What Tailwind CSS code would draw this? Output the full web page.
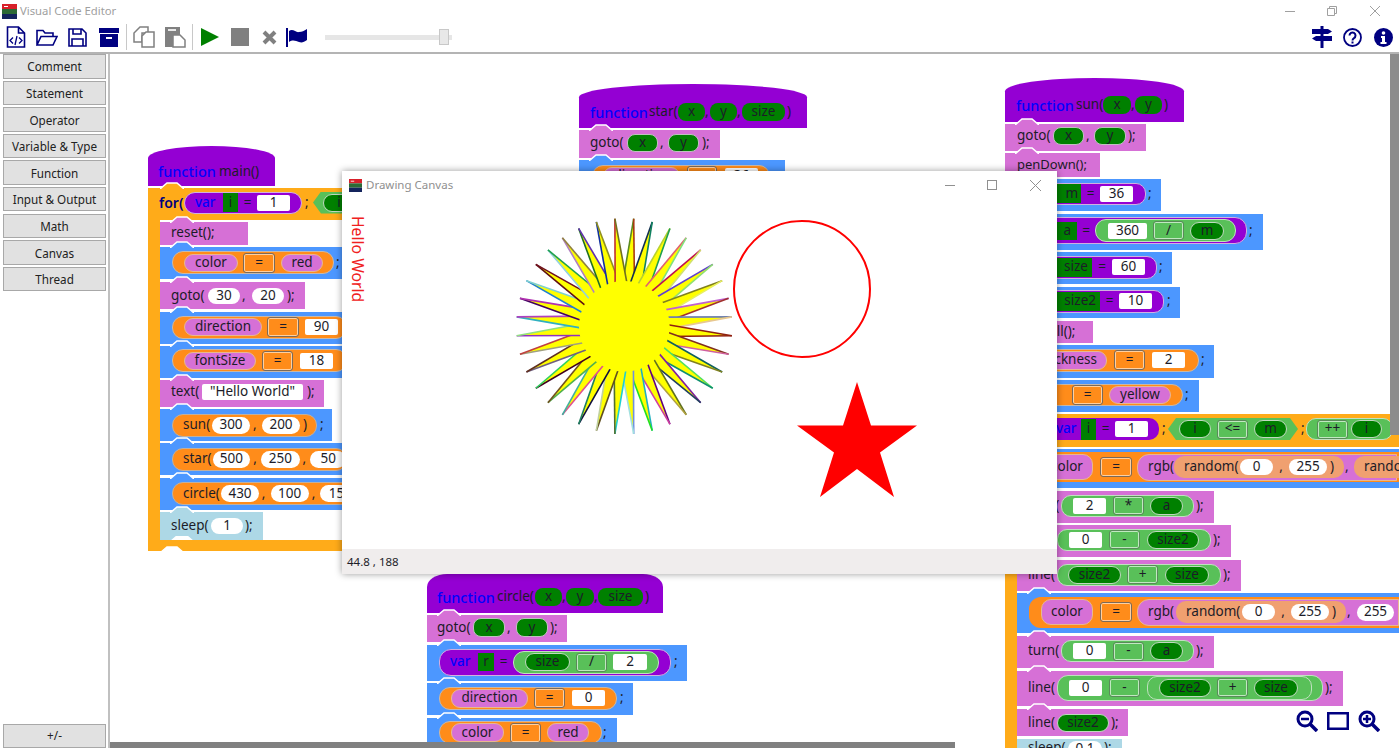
<!DOCTYPE html>
<html>
<head>
<meta charset="utf-8">
<title>Visual Code Editor</title>
<script src="https://cdn.jsdelivr.net/npm/@tailwindcss/browser@4"></script>
</head>
<body class="bg-white overflow-hidden">
<svg class="absolute w-0 h-0"><defs><path id="n" d="M0 7L7 1H17L24 7" fill="currentColor" stroke="#fff" stroke-width="1.5"/></defs></svg>
<div class="w-[1399px] h-[748px] flex flex-col overflow-hidden whitespace-nowrap text-[#1c1c28] text-[13.5px] leading-none font-['Noto_Sans',sans-serif]">

<!-- title bar -->
<div class="h-[22px] shrink-0 flex items-center pl-[2px]">
  <svg width="15" height="15" viewBox="0 0 15 15"><rect width="15" height="5" fill="#d8202a"/><rect x="2" y="2" width="4" height="1" fill="#fff"/><rect y="5" width="15" height="5" fill="#2d6a35"/><rect y="10" width="15" height="5" fill="#14245c"/></svg>
  <span class="ml-[3px] text-[11.3px] text-[#a0a0a0]">Visual Code Editor</span>
  <div class="ml-auto flex items-center pr-[19px]">
    <svg width="10" height="10" viewBox="0 0 10 10"><path d="M0 5.5H10" stroke="#a0a0a0"/></svg>
    <svg class="ml-[32px]" width="10" height="10" viewBox="0 0 10 10" fill="none" stroke="#a0a0a0"><path d="M.5 2.5h7v7h-7zM2.5 2.5v-2h7v7h-2"/></svg>
    <svg class="ml-[33px]" width="10" height="10" viewBox="0 0 10 10"><path d="M0 0L10 10M10 0L0 10" stroke="#a0a0a0"/></svg>
  </div>
</div>

<!-- toolbar -->
<div class="h-[30px] shrink-0 flex items-center pl-[6px] pr-[6px] border-b-2 border-[#b4b4b4] box-content">
  <svg width="20" height="22" viewBox="0 0 20 22" fill="none" stroke="#000080" stroke-width="1.6"><path d="M1.5 1h11l6 6v14h-17zM12.5 1v6h6"/><path d="M7 11.5l-3 3 3 3M13 11.5l3 3-3 3M11 10l-2 9" stroke-width="1.3"/></svg>
  <svg class="ml-[10px]" width="22" height="17" viewBox="0 0 22 17" fill="none" stroke="#000080" stroke-width="1.6"><path d="M1 16V1.5h6l2 2.5h8v3M1 16l4-8.500h16l-4 8.500z"/></svg>
  <svg class="ml-[10px]" width="19" height="19" viewBox="0 0 19 19" fill="none" stroke="#000080" stroke-width="1.6"><path d="M1 1h13l4 4v13H1zM5 1v5h8V1M4 18v-7h11v7"/></svg>
  <svg class="ml-[12px]" width="20" height="19" viewBox="0 0 20 19" fill="#000080"><rect width="20" height="5"/><rect x="1" y="6" width="18" height="13"/><rect x="7" y="9" width="6" height="2" fill="#fff"/></svg>
  <div class="ml-[7px] w-px h-[26px] bg-[#c8c8c8]"></div>
  <svg class="ml-[6px]" width="22" height="22" viewBox="0 0 22 22" fill="#fff" stroke="#808080" stroke-width="1.5"><path d="M7 1h8v6H9v9H1V7z"/><path d="M13 6h8v15H9V10z"/></svg>
  <svg class="ml-[9px]" width="22" height="22" viewBox="0 0 22 22"><path d="M1 1h15v8H9v12H1z" fill="#808080"/><rect x="4" y="3" width="8" height="2" fill="#e8e8e8"/><path d="M9 9h7l5 5v7H9z" fill="#fff" stroke="#808080" stroke-width="1.500"/></svg>
  <div class="ml-[6px] w-px h-[26px] bg-[#c8c8c8]"></div>
  <svg class="ml-[8px]" width="18" height="18" viewBox="0 0 18 18"><path d="M0 0L18 9L0 18z" fill="#008000"/></svg>
  <div class="ml-[12px] w-[18px] h-[18px] bg-[#808080]"></div>
  <svg class="ml-[13px]" width="15" height="15" viewBox="0 0 15 15"><path d="M2 2L13 13M13 2L2 13" stroke="#808080" stroke-width="4"/></svg>
  <svg class="ml-[9px]" width="21" height="19" viewBox="0 0 21 19" fill="#000080"><rect width="2" height="19"/><path d="M3 3c4-3 7 2 10 1 3 0 5-1 8-3v11c-3 2-5 3-8 2-3-1-6-3-10 0z"/></svg>
  <div class="ml-[18px] w-[127px] h-[5px] bg-[#e6e6e6] relative flex items-center">
    <div class="absolute left-[114px] w-[10px] h-[16px] bg-[#e8e8e8] border border-[#c8c8c8]"></div>
  </div>
  <div class="ml-auto flex items-center">
    <svg width="20" height="22" viewBox="0 0 20 22" fill="#000080"><rect x="8.500" width="3" height="22"/><path d="M0 3H16L20 5.500L16 8H0z"/><path d="M4 10H20V15H4L0 12.500z"/></svg>
    <svg class="ml-[11px]" width="19" height="19" viewBox="0 0 19 19" fill="none" stroke="#000080" stroke-width="1.800"><circle cx="9.500" cy="9.500" r="8.500"/><path d="M6.500 7.500a3 3 0 1 1 4.500 2.600c-1.200.7-1.500 1.300-1.500 2.400" stroke-width="2"/><path d="M9.500 13.500v2" stroke-width="2"/></svg>
    <svg class="ml-[12px]" width="19" height="19" viewBox="0 0 19 19"><circle cx="9.500" cy="9.500" r="9.500" fill="#000080"/><circle cx="9.500" cy="5" r="1.800" fill="#fff"/><path d="M7 8h4v6h1.500v2h-6v-2H8v-4H7z" fill="#fff"/></svg>
  </div>
</div>

<div class="flex flex-1 min-h-0">
  <!-- sidebar -->
  <div class="w-[110px] shrink-0 border-r-2 border-[#c0c0c0] pl-[3px] pr-[2px] flex flex-col gap-[2.1px] text-[11.7px] text-[#222]">
    <div class="h-[24.5px] pt-[2px] flex items-center justify-center bg-[#e1e1e1] border border-[#a8a8a8]">Comment</div>
    <div class="h-[24.5px] pt-[2px] flex items-center justify-center bg-[#e1e1e1] border border-[#a8a8a8]">Statement</div>
    <div class="h-[24.5px] pt-[2px] flex items-center justify-center bg-[#e1e1e1] border border-[#a8a8a8]">Operator</div>
    <div class="h-[24.5px] pt-[2px] flex items-center justify-center bg-[#e1e1e1] border border-[#a8a8a8]">Variable &amp; Type</div>
    <div class="h-[24.5px] pt-[2px] flex items-center justify-center bg-[#e1e1e1] border border-[#a8a8a8]">Function</div>
    <div class="h-[24.5px] pt-[2px] flex items-center justify-center bg-[#e1e1e1] border border-[#a8a8a8]">Input &amp; Output</div>
    <div class="h-[24.5px] pt-[2px] flex items-center justify-center bg-[#e1e1e1] border border-[#a8a8a8]">Math</div>
    <div class="h-[24.5px] pt-[2px] flex items-center justify-center bg-[#e1e1e1] border border-[#a8a8a8]">Canvas</div>
    <div class="h-[24.5px] pt-[2px] flex items-center justify-center bg-[#e1e1e1] border border-[#a8a8a8]">Thread</div>
    <div class="mt-auto h-[24px] flex items-center justify-center bg-[#e1e1e1] border border-[#a8a8a8]">+/-</div>
  </div>

  <!-- canvas -->
  <div class="relative flex-1 overflow-hidden">

    <!-- main -->
    <div class="absolute left-[38px] top-[92px] flex flex-col">
      <div class="h-[40px] w-[127px] bg-[#9400d3] rounded-[50%_50%_0_0/30%_30%_0_0] flex items-end pl-[10px] pb-[8px]"><span class="w-[61px] text-[#0000ff] text-[14.500px] font-medium">function</span><span>main()</span></div>
      <div class="relative mt-[2px] h-[32px] w-[450px] bg-[#ffab19] flex items-center pl-[11px] pb-[3px]">
        <svg class="absolute left-[12px] -top-[6px] w-[24px] h-[7px] text-[#ffab19]"><use href="#n"/></svg>
        <span class="w-[25px] text-[#000080] font-semibold text-[14px]">for(</span>
        <div class="w-[118px] h-[22px] rounded-[11px] bg-[#9400d3] border border-[#d0b0e0] flex items-center pl-[10px]">
          <span class="w-[28px] text-[#0000ff] font-medium">var</span>
          <div class="w-[15px] h-[19px] bg-[#008000] flex items-center justify-center">i</div>
          <span class="w-[19px] text-center">=</span>
          <div class="w-[33px] h-[16px] bg-white rounded-[2px] flex items-center justify-center">1</div>
        </div>
        <span class="w-[8px] ml-[3px]">;</span>
        <div class="w-[200px] h-[22px] bg-[#59c059] flex items-center pl-[10px] [clip-path:polygon(8px_0,calc(100%-8px)_0,100%_50%,calc(100%-8px)_100%,8px_100%,0_50%)]">
          <div class="w-[32px] h-[18px] rounded-[9px] bg-[#008000] border border-[#c0d8c0] flex items-center justify-center">i</div>
        </div>
      </div>
      <div class="flex">
        <div class="w-[12px] bg-[#ffab19] shrink-0"></div>
        <div class="flex flex-col">
          <div class="relative mt-[2px] h-[23px] w-[88px] bg-[#d670d6] flex items-center pl-[11px] pb-[2px]">
            <svg class="absolute left-[10px] -top-[6px] w-[24px] h-[7px] text-[#d670d6]"><use href="#n"/></svg>reset();
          </div>
          <div class="relative mt-[2px] h-[32px] w-[190px] bg-[#4c97ff] flex items-center pl-[12px] pb-[1px]">
            <svg class="absolute left-[10px] -top-[6px] w-[24px] h-[7px] text-[#4c97ff]"><use href="#n"/></svg>
            <div class="w-[162px] h-[23px] rounded-[11px] bg-[#ff8c1a] border border-[#c8b8a8] flex items-center pl-[11px]">
              <div class="w-[54px] h-[18px] rounded-[9px] bg-[#d670d6] border border-[#e8b890] flex items-center justify-center">color</div>
              <div class="ml-[5px] w-[32px] h-[20px] rounded-[3px] bg-[#ff8c1a] border border-[#7a6a5a] shadow-[inset_0_0_0_1px_#ffd0a0] flex items-center justify-center">=</div>
              <div class="ml-[6px] w-[42px] h-[18px] rounded-[9px] bg-[#d670d6] border border-[#e8b890] flex items-center justify-center">red</div>
            </div>
            <span class="ml-[2px]">;</span>
          </div>
          <div class="relative mt-[3px] h-[27px] w-[145px] bg-[#d670d6] flex items-center pl-[11px]">
            <svg class="absolute left-[10px] -top-[6px] w-[24px] h-[7px] text-[#d670d6]"><use href="#n"/></svg>
            <span class="w-[37px]">goto(</span>
            <div class="w-[32px] h-[16px] bg-white rounded-full flex items-center justify-center">30</div>
            <span class="w-[12px] pl-[2px]">,</span>
            <div class="w-[32px] h-[16px] bg-white rounded-full flex items-center justify-center">20</div>
            <span class="ml-[3px]">);</span>
          </div>
          <div class="relative mt-[3px] h-[32px] w-[190px] bg-[#4c97ff] flex items-center pl-[12px] pb-[2px]">
            <svg class="absolute left-[10px] -top-[6px] w-[24px] h-[7px] text-[#4c97ff]"><use href="#n"/></svg>
            <div class="w-[175px] h-[23px] rounded-[11px] bg-[#ff8c1a] border border-[#c8b8a8] flex items-center pl-[11px]">
              <div class="w-[78px] h-[18px] rounded-[9px] bg-[#d670d6] border border-[#e8b890] flex items-center justify-center">direction</div>
              <div class="ml-[5px] w-[32px] h-[20px] rounded-[3px] bg-[#ff8c1a] border border-[#7a6a5a] shadow-[inset_0_0_0_1px_#ffd0a0] flex items-center justify-center">=</div>
              <div class="ml-[6px] w-[33px] h-[16px] bg-white rounded-[2px] flex items-center justify-center">90</div>
            </div>
          </div>
          <div class="relative mt-[2px] h-[32px] w-[190px] bg-[#4c97ff] flex items-center pl-[12px] pb-[3px]">
            <svg class="absolute left-[10px] -top-[6px] w-[24px] h-[7px] text-[#4c97ff]"><use href="#n"/></svg>
            <div class="w-[175px] h-[23px] rounded-[11px] bg-[#ff8c1a] border border-[#c8b8a8] flex items-center pl-[11px]">
              <div class="w-[72px] h-[18px] rounded-[9px] bg-[#d670d6] border border-[#e8b890] flex items-center justify-center">fontSize</div>
              <div class="ml-[6px] w-[31px] h-[20px] rounded-[3px] bg-[#ff8c1a] border border-[#7a6a5a] shadow-[inset_0_0_0_1px_#ffd0a0] flex items-center justify-center">=</div>
              <div class="ml-[7px] w-[33px] h-[16px] bg-white rounded-[2px] flex items-center justify-center">18</div>
            </div>
          </div>
          <div class="relative mt-[2px] h-[27px] w-[164px] bg-[#d670d6] flex items-center pl-[11px] pb-[3px]">
            <svg class="absolute left-[10px] -top-[6px] w-[24px] h-[7px] text-[#d670d6]"><use href="#n"/></svg>
            <span class="w-[31px]">text(</span>
            <div class="w-[101px] h-[16px] bg-white rounded-[2px] flex items-center justify-center">"Hello World"</div>
            <span class="ml-[4px]">);</span>
          </div>
          <div class="relative mt-[2px] h-[32px] w-[172px] bg-[#4c97ff] flex items-center pl-[12px]">
            <svg class="absolute left-[10px] -top-[6px] w-[24px] h-[7px] text-[#4c97ff]"><use href="#n"/></svg>
            <div class="w-[145px] h-[23px] rounded-[11px] bg-[#ff8c1a] border border-[#c0b0a0] flex items-center pl-[10px]">
              <span class="w-[29px]">sun(</span>
              <div class="w-[38px] h-[17px] bg-white rounded-full flex items-center justify-center">300</div>
              <span class="w-[12px] pl-[3px]">,</span>
              <div class="w-[38px] h-[17px] bg-white rounded-full flex items-center justify-center">200</div>
              <span class="ml-[3px]">)</span>
            </div>
            <span class="ml-[3px]">;</span>
          </div>
          <div class="relative mt-[2px] h-[32px] w-[190px] bg-[#4c97ff] flex items-center pl-[12px]">
            <svg class="absolute left-[10px] -top-[6px] w-[24px] h-[7px] text-[#4c97ff]"><use href="#n"/></svg>
            <div class="w-[175px] h-[23px] rounded-[11px] bg-[#ff8c1a] border border-[#c0b0a0] flex items-center pl-[10px]">
              <span class="w-[30px]">star(</span>
              <div class="w-[38px] h-[17px] bg-white rounded-full flex items-center justify-center">500</div>
              <span class="w-[11px] pl-[3px]">,</span>
              <div class="w-[39px] h-[17px] bg-white rounded-full flex items-center justify-center">250</div>
              <span class="w-[11px] pl-[3px]">,</span>
              <div class="w-[36px] h-[17px] bg-white rounded-full flex items-center justify-center">50</div>
            </div>
          </div>
          <div class="relative mt-[3px] h-[32px] w-[190px] bg-[#4c97ff] flex items-center pl-[12px] pb-[1px]">
            <svg class="absolute left-[10px] -top-[6px] w-[24px] h-[7px] text-[#4c97ff]"><use href="#n"/></svg>
            <div class="w-[190px] h-[23px] rounded-[11px] bg-[#ff8c1a] border border-[#c0b0a0] flex items-center pl-[10px] shrink-0">
              <span class="w-[39px]">circle(</span>
              <div class="w-[38px] h-[17px] bg-white rounded-full flex items-center justify-center">430</div>
              <span class="w-[12px] pl-[3px]">,</span>
              <div class="w-[39px] h-[17px] bg-white rounded-full flex items-center justify-center">100</div>
              <span class="w-[11px] pl-[3px]">,</span>
              <div class="w-[42px] h-[17px] bg-white rounded-full flex items-center justify-center">150</div>
            </div>
          </div>
          <div class="relative mt-[2px] h-[28px] w-[103px] bg-[#add8e6] flex items-center pl-[11px]">
            <svg class="absolute left-[10px] -top-[6px] w-[24px] h-[7px] text-[#add8e6]"><use href="#n"/></svg>
            <span class="w-[40px]">sleep(</span>
            <div class="w-[32px] h-[16px] bg-white rounded-full flex items-center justify-center">1</div>
            <span class="ml-[2px]">);</span>
            <svg class="absolute left-[10px] bottom-0 w-[24px] h-[4px] text-white"><use href="#n" y="-1"/></svg>
          </div>
        </div>
      </div>
      <div class="relative h-[11px] w-[250px] bg-[#ffab19]">
        <svg class="absolute left-[12px] bottom-0 w-[24px] h-[5px] text-white"><use href="#n"/></svg>
      </div>
    </div>

    <!-- star -->
    <div class="absolute left-[469px] top-[30px] flex flex-col">
      <div class="h-[44px] w-[228px] bg-[#9400d3] rounded-[50%_50%_0_0/30%_30%_0_0] flex items-end pl-[11px] pb-[7px]">
        <div class="h-[18px] flex items-center">
          <span class="w-[59px] text-[#0000ff] text-[14.500px] font-medium">function</span><span class="w-[29px]">star(</span>
          <div class="w-[27px] h-[18px] rounded-[8px] bg-[#008000] flex items-center justify-center">x</div><span class="w-[5px]">,</span>
          <div class="w-[27px] h-[18px] rounded-[8px] bg-[#008000] flex items-center justify-center">y</div><span class="w-[5px]">,</span>
          <div class="w-[43px] h-[18px] rounded-[8px] bg-[#008000] flex items-center justify-center">size</div><span class="ml-[2px]">)</span>
        </div>
      </div>
      <div class="relative mt-[2px] h-[28px] w-[141px] bg-[#d670d6] flex items-center pl-[11px] pb-[3px]">
        <svg class="absolute left-[10px] -top-[6px] w-[24px] h-[7px] text-[#d670d6]"><use href="#n"/></svg>
        <span class="w-[37px]">goto(</span>
        <div class="w-[31px] h-[18px] rounded-[8px] bg-[#008000] border border-[#c0c0c0] flex items-center justify-center">x</div><span class="w-[10px] pl-[2px]">,</span>
        <div class="w-[31px] h-[18px] rounded-[8px] bg-[#008000] border border-[#c0c0c0] flex items-center justify-center">y</div><span class="ml-[3px]">);</span>
      </div>
      <div class="relative mt-[2px] h-[32px] w-[206px] bg-[#4c97ff] flex items-center pl-[13px]">
        <svg class="absolute left-[10px] -top-[6px] w-[24px] h-[7px] text-[#4c97ff]"><use href="#n"/></svg>
        <div class="w-[178px] h-[23px] rounded-[11px] bg-[#ff8c1a] border border-[#c8b8a8] flex items-center pl-[10px]">
          <div class="w-[77px] h-[18px] rounded-[9px] bg-[#d670d6] border border-[#e8b890] flex items-center justify-center">direction</div>
          <div class="ml-[7px] w-[30px] h-[20px] rounded-[3px] bg-[#ff8c1a] border border-[#7a6a5a] shadow-[inset_0_0_0_1px_#ffd0a0] flex items-center justify-center">=</div>
          <div class="ml-[8px] w-[33px] h-[16px] bg-white rounded-[2px] flex items-center justify-center">36</div>
        </div>
      </div>
    </div>

    <!-- circle -->
    <div class="absolute left-[317px] top-[520px] flex flex-col">
      <div class="h-[39px] w-[236px] bg-[#9400d3] rounded-[20px_20px_0_0/13px_13px_0_0] flex items-end pl-[10px] pb-[7px]">
        <div class="h-[18px] flex items-center">
          <span class="w-[60px] text-[#0000ff] text-[14.500px] font-medium">function</span><span class="w-[38px]">circle(</span>
          <div class="w-[27px] h-[18px] rounded-[8px] bg-[#008000] flex items-center justify-center">x</div><span class="w-[4px]">,</span>
          <div class="w-[28px] h-[18px] rounded-[8px] bg-[#008000] flex items-center justify-center">y</div><span class="w-[4px]">,</span>
          <div class="w-[45px] h-[18px] rounded-[8px] bg-[#008000] flex items-center justify-center">size</div><span class="ml-[2px]">)</span>
        </div>
      </div>
      <div class="relative mt-[2px] h-[27px] w-[140px] bg-[#d670d6] flex items-center pl-[10px] pb-[2px]">
        <svg class="absolute left-[10px] -top-[6px] w-[24px] h-[7px] text-[#d670d6]"><use href="#n"/></svg>
        <span class="w-[36px]">goto(</span>
        <div class="w-[32px] h-[19px] rounded-[8px] bg-[#008000] border border-[#c0c0c0] flex items-center justify-center">x</div><span class="w-[11px] pl-[2px]">,</span>
        <div class="w-[32px] h-[19px] rounded-[8px] bg-[#008000] border border-[#c0c0c0] flex items-center justify-center">y</div><span class="ml-[2px]">);</span>
      </div>
      <div class="relative mt-[3px] h-[36px] w-[260px] bg-[#4c97ff] flex items-center pl-[12px] pb-[2px]">
        <svg class="absolute left-[10px] -top-[6px] w-[24px] h-[7px] text-[#4c97ff]"><use href="#n"/></svg>
        <div class="w-[232px] h-[27px] rounded-[12px] bg-[#9400d3] border border-[#d0b0e0] flex items-center pl-[10px]">
          <span class="w-[28px] text-[#0000ff] font-medium">var</span>
          <div class="w-[16px] h-[18px] bg-[#008000] flex items-center justify-center">r</div>
          <span class="w-[19px] text-center">=</span>
          <div class="w-[146px] h-[23px] rounded-[11px] bg-[#59c059] border border-[#c0e0c0] flex items-center pl-[11px]">
            <div class="w-[45px] h-[18px] rounded-[9px] bg-[#008000] border border-[#c0d8c0] flex items-center justify-center">size</div>
            <div class="ml-[6px] w-[31px] h-[19px] rounded-[3px] bg-[#59c059] border border-[#5a8a5a] shadow-[inset_0_0_0_1px_#c0e8c0] flex items-center justify-center">/</div>
            <div class="ml-[6px] w-[34px] h-[16px] bg-white rounded-[2px] flex items-center justify-center">2</div>
          </div>
        </div>
        <span class="ml-[3px]">;</span>
      </div>
      <div class="relative mt-[2px] h-[32px] w-[206px] bg-[#4c97ff] flex items-center pl-[12px] pb-[2px]">
        <svg class="absolute left-[10px] -top-[6px] w-[24px] h-[7px] text-[#4c97ff]"><use href="#n"/></svg>
        <div class="w-[178px] h-[23px] rounded-[11px] bg-[#ff8c1a] border border-[#c8b8a8] flex items-center pl-[11px]">
          <div class="w-[77px] h-[19px] rounded-[9px] bg-[#d670d6] border border-[#e8b890] flex items-center justify-center">direction</div>
          <div class="ml-[6px] w-[31px] h-[20px] rounded-[3px] bg-[#ff8c1a] border border-[#7a6a5a] shadow-[inset_0_0_0_1px_#ffd0a0] flex items-center justify-center">=</div>
          <div class="ml-[7px] w-[33px] h-[16px] bg-white rounded-[2px] flex items-center justify-center">0</div>
        </div>
        <span class="ml-[3px]">;</span>
      </div>
      <div class="relative mt-[3px] h-[32px] w-[190px] bg-[#4c97ff] flex items-center pl-[12px] pb-[3px]">
        <svg class="absolute left-[10px] -top-[6px] w-[24px] h-[7px] text-[#4c97ff]"><use href="#n"/></svg>
        <div class="w-[163px] h-[23px] rounded-[11px] bg-[#ff8c1a] border border-[#c8b8a8] flex items-center pl-[11px]">
          <div class="w-[53px] h-[19px] rounded-[9px] bg-[#d670d6] border border-[#e8b890] flex items-center justify-center">color</div>
          <div class="ml-[6px] w-[31px] h-[20px] rounded-[3px] bg-[#ff8c1a] border border-[#7a6a5a] shadow-[inset_0_0_0_1px_#ffd0a0] flex items-center justify-center">=</div>
          <div class="ml-[6px] w-[42px] h-[19px] rounded-[9px] bg-[#d670d6] border border-[#e8b890] flex items-center justify-center">red</div>
        </div>
        <span class="ml-[1px]">;</span>
      </div>
    </div>

    <!-- sun -->
    <div class="absolute left-[895px] top-[24px] flex flex-col">
      <div class="h-[44px] w-[179px] bg-[#9400d3] rounded-[50%_50%_0_0/30%_30%_0_0] flex items-end pl-[11px] pb-[8px]">
        <div class="h-[18px] flex items-center">
          <span class="w-[60px] text-[#0000ff] text-[14.500px] font-medium">function</span><span class="w-[27px]">sun(</span>
          <div class="w-[28px] h-[18px] rounded-[8px] bg-[#008000] flex items-center justify-center">x</div><span class="w-[4px]">,</span>
          <div class="w-[27px] h-[18px] rounded-[8px] bg-[#008000] flex items-center justify-center">y</div><span class="ml-[2px]">)</span>
        </div>
      </div>
      <div class="relative mt-[2px] h-[27px] w-[141px] bg-[#d670d6] flex items-center pl-[12px] pb-[3px]">
        <svg class="absolute left-[10px] -top-[6px] w-[24px] h-[7px] text-[#d670d6]"><use href="#n"/></svg>
        <span class="w-[36px]">goto(</span>
        <div class="w-[31px] h-[18px] rounded-[8px] bg-[#008000] border border-[#c0c0c0] flex items-center justify-center">x</div><span class="w-[10px] pl-[2px]">,</span>
        <div class="w-[32px] h-[18px] rounded-[8px] bg-[#008000] border border-[#c0c0c0] flex items-center justify-center">y</div><span class="ml-[2px]">);</span>
      </div>
      <div class="relative mt-[2px] h-[24px] w-[95px] bg-[#d670d6] flex items-center pl-[12px] pb-[1px]">
        <svg class="absolute left-[10px] -top-[6px] w-[24px] h-[7px] text-[#d670d6]"><use href="#n"/></svg><span class="text-[13px]">penDown();</span>
      </div>
      <div class="relative mt-[2px] h-[32px] w-[156px] bg-[#4c97ff] flex items-center pl-[12px] pb-[3px]">
        <div class="w-[129px] h-[22px] rounded-[10px] bg-[#9400d3] border border-[#d0b0e0] flex items-center pl-[10px]">
          <span class="w-[25px] text-[#0000ff] font-medium">var</span>
          <div class="w-[28px] h-[19px] bg-[#008000] flex items-center justify-end pr-[3px]">m</div>
          <span class="w-[19px] text-center">=</span>
          <div class="w-[33px] h-[16px] bg-white rounded-[2px] flex items-center justify-center">36</div>
        </div>
        <span class="ml-[2px]">;</span>
      </div>
      <div class="relative mt-[3px] h-[36px] w-[258px] bg-[#4c97ff] flex items-center pl-[12px] pb-[3px]">
        <div class="w-[230px] h-[27px] rounded-[12px] bg-[#9400d3] border border-[#d0b0e0] flex items-center pl-[10px]">
          <span class="w-[25px] text-[#0000ff] font-medium">var</span>
          <div class="w-[24px] h-[18px] bg-[#008000] flex items-center justify-end pr-[6px]">a</div>
          <span class="w-[18px] text-center">=</span>
          <div class="w-[141px] h-[23px] rounded-[11px] bg-[#59c059] border border-[#c0e0c0] flex items-center pl-[12px]">
            <div class="w-[39px] h-[16px] bg-white rounded-[2px] flex items-center justify-center">360</div>
            <div class="ml-[6px] w-[31px] h-[19px] rounded-[3px] bg-[#59c059] border border-[#5a8a5a] shadow-[inset_0_0_0_1px_#c0e8c0] flex items-center justify-center">/</div>
            <div class="ml-[6px] w-[34px] h-[18px] rounded-[9px] bg-[#008000] border border-[#c0d8c0] flex items-center justify-center">m</div>
          </div>
        </div>
        <span class="ml-[2px]">;</span>
      </div>
      <div class="relative mt-[2px] h-[32px] w-[167px] bg-[#4c97ff] flex items-center pl-[12px] pb-[2px]">
        <div class="w-[140px] h-[23px] rounded-[10px] bg-[#9400d3] border border-[#d0b0e0] flex items-center pl-[10px]">
          <span class="w-[28px] text-[#0000ff] font-medium">var</span>
          <div class="w-[36px] h-[19px] bg-[#008000] flex items-center justify-end pr-[4px]">size</div>
          <span class="w-[20px] text-center">=</span>
          <div class="w-[33px] h-[16px] bg-white rounded-[2px] flex items-center justify-center">60</div>
        </div>
        <span class="ml-[2px]">;</span>
      </div>
      <div class="relative mt-[3px] h-[31px] w-[175px] bg-[#4c97ff] flex items-center pl-[12px] pb-[3px]">
        <div class="w-[147px] h-[23px] rounded-[10px] bg-[#9400d3] border border-[#d0b0e0] flex items-center pl-[10px]">
          <span class="w-[28px] text-[#0000ff] font-medium">var</span>
          <div class="w-[44px] h-[19px] bg-[#008000] flex items-center justify-end pr-[4px]">size2</div>
          <span class="w-[19px] text-center">=</span>
          <div class="w-[33px] h-[16px] bg-white rounded-[2px] flex items-center justify-center">10</div>
        </div>
        <span class="ml-[3px]">;</span>
      </div>
      <div class="relative mt-[3px] h-[22px] w-[88px] bg-[#d670d6] flex items-center pl-[17px]">penFill();</div>
      <div class="relative mt-[2px] h-[33px] w-[209px] bg-[#4c97ff] flex items-center pl-[12px] pb-[3px]">
        <div class="w-[182px] h-[23px] rounded-[11px] bg-[#ff8c1a] border border-[#c8b8a8] flex items-center pl-[10px]">
          <div class="w-[79px] h-[19px] rounded-[9px] bg-[#d670d6] border border-[#e8b890] flex items-center justify-end pr-[9px]">thickness</div>
          <div class="ml-[7px] w-[31px] h-[20px] rounded-[3px] bg-[#ff8c1a] border border-[#7a6a5a] shadow-[inset_0_0_0_1px_#ffd0a0] flex items-center justify-center">=</div>
          <div class="ml-[7px] w-[33px] h-[16px] bg-white rounded-[2px] flex items-center justify-center">2</div>
        </div>
        <span class="ml-[2px]">;</span>
      </div>
      <div class="relative mt-[2px] h-[32px] w-[194px] bg-[#4c97ff] flex items-center pl-[12px] pb-[2px]">
        <div class="w-[166px] h-[22px] rounded-[11px] bg-[#ff8c1a] border border-[#c8b8a8] flex items-center pl-[10px]">
          <div class="w-[28px] h-[18px] rounded-[9px] bg-[#d670d6] border border-[#e8b890]"></div>
          <div class="ml-[16px] w-[31px] h-[20px] rounded-[3px] bg-[#ff8c1a] border border-[#7a6a5a] shadow-[inset_0_0_0_1px_#ffd0a0] flex items-center justify-center">=</div>
          <div class="ml-[6px] w-[62px] h-[18px] rounded-[9px] bg-[#d670d6] border border-[#e8b890] flex items-center justify-center">yellow</div>
        </div>
        <span class="ml-[2px]">;</span>
      </div>
      <div class="relative mt-[2px] h-[33px] w-[394px] bg-[#ffab19] flex items-center pl-[12px] pb-[3px]">
        <span class="w-[25px] text-[#000080] font-semibold">for(</span>
        <div class="w-[117px] h-[22px] rounded-[10px] bg-[#9400d3] flex items-center pl-[12px]">
          <span class="w-[27px] text-[#0000ff] font-medium pl-[2px]">var</span>
          <div class="w-[15px] h-[21px] bg-[#008000] flex items-center justify-center">i</div>
          <span class="w-[19px] text-center">=</span>
          <div class="w-[33px] h-[16px] bg-white rounded-[2px] flex items-center justify-center">1</div>
        </div>
        <span class="w-[9px] pl-[3px]">;</span>
        <div class="w-[130px] h-[22px] bg-[#59c059] flex items-center pl-[11px] [clip-path:polygon(8px_0,calc(100%-8px)_0,100%_50%,calc(100%-8px)_100%,8px_100%,0_50%)]">
          <div class="w-[32px] h-[18px] rounded-[9px] bg-[#008000] border border-[#c0d8c0] flex items-center justify-center">i</div>
          <div class="ml-[6px] w-[31px] h-[19px] rounded-[3px] bg-[#59c059] border border-[#5a8a5a] shadow-[inset_0_0_0_1px_#c0e8c0] flex items-center justify-center">&lt;=</div>
          <div class="ml-[6px] w-[33px] h-[18px] rounded-[9px] bg-[#008000] border border-[#c0d8c0] flex items-center justify-center">m</div>
        </div>
        <span class="w-[8px] pl-[3px]">;</span>
        <div class="w-[87px] h-[22px] rounded-[10px] bg-[#59c059] border border-[#c0e0c0] flex items-center pl-[10px]">
          <div class="w-[31px] h-[19px] rounded-[3px] bg-[#59c059] border border-[#5a8a5a] shadow-[inset_0_0_0_1px_#c0e8c0] flex items-center justify-center">++</div>
          <div class="ml-[3px] w-[31px] h-[18px] rounded-[9px] bg-[#008000] border border-[#c0d8c0] flex items-center justify-center">i</div>
        </div>
      </div>
      <div class="flex">
        <div class="w-[12px] bg-[#ffab19] shrink-0"></div>
        <div class="flex flex-col">
          <div class="relative mt-[2px] h-[39px] w-[382px] bg-[#4c97ff] flex items-center pl-[12px] pb-[3px]">
            <div class="w-[370px] h-[30px] rounded-l-[12px] bg-[#ff8c1a] flex items-center pl-[12px]">
              <div class="w-[52px] h-[26px] rounded-[10px] bg-[#d670d6] border border-[#e8b890] flex items-center justify-center">color</div>
              <div class="ml-[7px] w-[32px] h-[20px] rounded-[3px] bg-[#ff8c1a] border border-[#7a6a5a] shadow-[inset_0_0_0_1px_#ffd0a0] flex items-center justify-center">=</div>
              <div class="ml-[5px] w-[260px] h-[27px] rounded-l-[12px] bg-[#d670d6] border border-[#e8b890] flex items-center pl-[10px]">
                <span class="w-[28px]">rgb(</span>
                <div class="w-[170px] h-[22px] rounded-[10px] bg-[#f0a070] shrink-0 flex items-center pl-[10px]">
                  <span class="w-[56px]">random(</span>
                  <div class="w-[33px] h-[16px] bg-white rounded-full flex items-center justify-center">0</div>
                  <span class="w-[16px] text-center">,</span>
                  <div class="w-[38px] h-[16px] bg-white rounded-full flex items-center justify-center">255</div>
                  <span class="ml-[3px]">)</span>
                </div>
                <span class="w-[10px] pl-[1px] shrink-0">,</span>
                <div class="w-[100px] h-[22px] rounded-[10px] bg-[#f0a070] shrink-0 flex items-center pl-[10px]">random(</div>
              </div>
            </div>
          </div>
          <div class="relative mt-[3px] h-[32px] w-[197px] bg-[#d670d6] flex items-center pl-[11px] pb-[3px]">
            <span class="w-[33px]">turn(</span>
            <div class="w-[133px] h-[22px] rounded-[10px] bg-[#59c059] border border-[#c0e0c0] flex items-center pl-[11px]">
              <div class="w-[33px] h-[16px] bg-white rounded-[2px] flex items-center justify-center">2</div>
              <div class="ml-[7px] w-[31px] h-[19px] rounded-[3px] bg-[#59c059] border border-[#5a8a5a] shadow-[inset_0_0_0_1px_#c0e8c0] flex items-center justify-center">*</div>
              <div class="ml-[6px] w-[33px] h-[18px] rounded-[9px] bg-[#008000] border border-[#c0d8c0] flex items-center justify-center">a</div>
            </div>
            <span class="ml-[2px]">);</span>
          </div>
          <div class="relative mt-[2px] h-[32px] w-[214px] bg-[#d670d6] flex items-center pl-[11px] pb-[3px]">
            <span class="w-[29px]">line(</span>
            <div class="w-[154px] h-[22px] rounded-[10px] bg-[#59c059] border border-[#c0e0c0] flex items-center pl-[11px]">
              <div class="w-[33px] h-[16px] bg-white rounded-[2px] flex items-center justify-center">0</div>
              <div class="ml-[7px] w-[31px] h-[19px] rounded-[3px] bg-[#59c059] border border-[#5a8a5a] shadow-[inset_0_0_0_1px_#c0e8c0] flex items-center justify-center">-</div>
              <div class="ml-[7px] w-[52px] h-[18px] rounded-[9px] bg-[#008000] border border-[#c0d8c0] flex items-center justify-center">size2</div>
            </div>
            <span class="ml-[2px]">);</span>
          </div>
          <div class="relative mt-[3px] h-[31px] w-[224px] bg-[#d670d6] flex items-center pl-[11px] pb-[2px]">
            <span class="w-[29px]">line(</span>
            <div class="w-[164px] h-[22px] rounded-[10px] bg-[#59c059] border border-[#c0e0c0] flex items-center pl-[10px]">
              <div class="w-[53px] h-[18px] rounded-[9px] bg-[#008000] border border-[#c0d8c0] flex items-center justify-center">size2</div>
              <div class="ml-[6px] w-[31px] h-[19px] rounded-[3px] bg-[#59c059] border border-[#5a8a5a] shadow-[inset_0_0_0_1px_#c0e8c0] flex items-center justify-center">+</div>
              <div class="ml-[7px] w-[44px] h-[18px] rounded-[9px] bg-[#008000] border border-[#c0d8c0] flex items-center justify-center">size</div>
            </div>
            <span class="ml-[2px]">);</span>
          </div>
          <div class="relative mt-[2px] h-[40px] w-[382px] bg-[#4c97ff] flex items-center pl-[12px] pb-[2px]">
            <svg class="absolute left-[10px] -top-[6px] w-[24px] h-[7px] text-[#4c97ff]"><use href="#n"/></svg>
            <div class="w-[370px] h-[31px] rounded-l-[12px] bg-[#ff8c1a] flex items-center pl-[12px]">
              <div class="w-[52px] h-[26px] rounded-[10px] bg-[#d670d6] border border-[#e8b890] flex items-center justify-center">color</div>
              <div class="ml-[7px] w-[32px] h-[20px] rounded-[3px] bg-[#ff8c1a] border border-[#7a6a5a] shadow-[inset_0_0_0_1px_#ffd0a0] flex items-center justify-center">=</div>
              <div class="ml-[5px] w-[262px] h-[27px] rounded-l-[12px] bg-[#d670d6] border border-[#e8b890] flex items-center pl-[10px]">
                <span class="w-[28px]">rgb(</span>
                <div class="w-[170px] h-[22px] rounded-[10px] bg-[#f0a070] shrink-0 flex items-center pl-[10px]">
                  <span class="w-[56px]">random(</span>
                  <div class="w-[33px] h-[16px] bg-white rounded-full flex items-center justify-center">0</div>
                  <span class="w-[16px] text-center">,</span>
                  <div class="w-[38px] h-[16px] bg-white rounded-full flex items-center justify-center">255</div>
                  <span class="ml-[3px]">)</span>
                </div>
                <span class="w-[11px] pl-[1px] shrink-0">,</span>
                <div class="w-[37px] h-[17px] bg-white rounded-full shrink-0 flex items-center justify-center">255</div>
              </div>
            </div>
          </div>
          <div class="relative mt-[3px] h-[32px] w-[197px] bg-[#d670d6] flex items-center pl-[11px] pb-[2px]">
            <svg class="absolute left-[10px] -top-[6px] w-[24px] h-[7px] text-[#d670d6]"><use href="#n"/></svg>
            <span class="w-[33px]">turn(</span>
            <div class="w-[133px] h-[22px] rounded-[10px] bg-[#59c059] border border-[#c0e0c0] flex items-center pl-[11px]">
              <div class="w-[33px] h-[16px] bg-white rounded-[2px] flex items-center justify-center">0</div>
              <div class="ml-[7px] w-[31px] h-[19px] rounded-[3px] bg-[#59c059] border border-[#5a8a5a] shadow-[inset_0_0_0_1px_#c0e8c0] flex items-center justify-center">-</div>
              <div class="ml-[6px] w-[33px] h-[18px] rounded-[9px] bg-[#008000] border border-[#c0d8c0] flex items-center justify-center">a</div>
            </div>
            <span class="ml-[2px]">);</span>
          </div>
          <div class="relative mt-[3px] h-[35px] w-[326px] bg-[#d670d6] flex items-center pl-[11px] pb-[2px]">
            <svg class="absolute left-[10px] -top-[6px] w-[24px] h-[7px] text-[#d670d6]"><use href="#n"/></svg>
            <span class="w-[29px]">line(</span>
            <div class="w-[266px] h-[26px] rounded-[11px] bg-[#59c059] border border-[#c0e0c0] flex items-center pl-[11px]">
              <div class="w-[33px] h-[16px] bg-white rounded-[2px] flex items-center justify-center">0</div>
              <div class="ml-[7px] w-[31px] h-[19px] rounded-[3px] bg-[#59c059] border border-[#5a8a5a] shadow-[inset_0_0_0_1px_#c0e8c0] flex items-center justify-center">-</div>
              <div class="ml-[7px] w-[165px] h-[24px] rounded-[10px] bg-[#59c059] border border-[#c0e0c0] flex items-center pl-[11px]">
                <div class="w-[52px] h-[18px] rounded-[9px] bg-[#008000] border border-[#c0d8c0] flex items-center justify-center">size2</div>
                <div class="ml-[6px] w-[31px] h-[19px] rounded-[3px] bg-[#59c059] border border-[#5a8a5a] shadow-[inset_0_0_0_1px_#c0e8c0] flex items-center justify-center">+</div>
                <div class="ml-[6px] w-[44px] h-[18px] rounded-[9px] bg-[#008000] border border-[#c0d8c0] flex items-center justify-center">size</div>
              </div>
            </div>
            <span class="ml-[2px]">);</span>
          </div>
          <div class="relative mt-[3px] h-[27px] w-[111px] bg-[#d670d6] flex items-center pl-[11px]">
            <svg class="absolute left-[10px] -top-[6px] w-[24px] h-[7px] text-[#d670d6]"><use href="#n"/></svg>
            <span class="w-[29px]">line(</span>
            <div class="w-[52px] h-[18px] rounded-[9px] bg-[#008000] border border-[#c0d8c0] flex items-center justify-center">size2</div>
            <span class="ml-[2px]">);</span>
          </div>
          <div class="relative mt-[3px] h-[30px] w-[105px] bg-[#add8e6] flex items-start pt-[2px] pl-[11px]">
            <span class="w-[40px]">sleep(</span>
            <div class="w-[34px] h-[16px] bg-white rounded-full flex items-center justify-center">0.1</div>
            <span class="ml-[2px]">);</span>
          </div>
        </div>
      </div>
    </div>

    <!-- scrollbars and zoom controls -->
    <div class="absolute right-0 top-0 w-[9px] h-[381px] bg-[#8c8c8c] z-[5]"></div>
    <div class="absolute left-0 bottom-0 w-[845px] h-[6px] bg-[#808080] z-[5]"></div>
    <div class="absolute left-[1186px] top-[656px] flex items-center z-[5]">
      <svg width="22" height="22" viewBox="0 0 22 22" fill="none" stroke="#000080"><circle cx="9" cy="9" r="7" stroke-width="3"/><path d="M14 14L21 21" stroke-width="3.500"/><path d="M5 9H13" stroke-width="2.500"/></svg>
      <svg class="ml-[9px]" width="22" height="18" viewBox="0 0 22 18" fill="none" stroke="#000080" stroke-width="2.500"><rect x="1.250" y="1.250" width="19.500" height="15.500"/></svg>
      <svg class="ml-[9px]" width="22" height="22" viewBox="0 0 22 22" fill="none" stroke="#000080"><circle cx="9" cy="9" r="7" stroke-width="3"/><path d="M14 14L21 21" stroke-width="3.500"/><path d="M5 9H13M9 5V13" stroke-width="2.500"/></svg>
    </div>

    <!-- drawing window -->
    <div class="absolute left-[232px] top-[117px] z-10 w-[715px] h-[403px] bg-white shadow-[0_0_7px_rgba(0,0,0,0.4)] flex flex-col">
      <div class="h-[28px] shrink-0 flex items-center pl-[7px] pr-[16px]">
        <svg width="13" height="13" viewBox="0 0 15 15"><rect width="15" height="5" fill="#d8202a"/><rect x="2" y="2" width="4" height="1" fill="#fff"/><rect y="5" width="15" height="5" fill="#2d6a35"/><rect y="10" width="15" height="5" fill="#14245c"/></svg>
        <span class="ml-[4px] text-[11.500px] text-[#909090]">Drawing Canvas</span>
        <div class="ml-auto flex items-center">
          <svg width="10" height="10" viewBox="0 0 10 10"><path d="M0 5.500H10" stroke="#909090"/></svg>
          <svg class="ml-[32px]" width="10" height="10" viewBox="0 0 10 10"><rect x=".5" y=".5" width="9" height="9" fill="none" stroke="#909090"/></svg>
          <svg class="ml-[33px]" width="11" height="11" viewBox="0 0 11 11"><path d="M0 0L11 11M11 0L0 11" stroke="#909090"/></svg>
        </div>
      </div>
      <div class="relative flex-1">
        <div class="absolute left-[7px] top-[17px] [writing-mode:vertical-rl] text-[15.7px] text-[#f02020]">Hello World</div>
        <svg class="absolute left-0 top-0" width="715" height="350" viewBox="342 199 715 350">
          <defs>
            <path id="ry" d="M-5.500-42L0-108L6.500-42Z" fill="#ffff00"/>
            <path id="ea" d="M-5.500-42L0-108" fill="none" stroke-width="1.600"/>
            <path id="eb" d="M6.500-42L0-108" fill="none" stroke-width="1.600"/>
          </defs>
          <g transform="translate(624.3 326.3)">
            <g transform="rotate(5)"><use href="#ry"/><use href="#ea" stroke="#5a8a20"/><use href="#eb" stroke="#a83a10"/></g>
            <g transform="rotate(15)"><use href="#ry"/><use href="#ea" stroke="#123050"/><use href="#eb" stroke="#108060"/></g>
            <g transform="rotate(25)"><use href="#ry"/><use href="#ea" stroke="#b8d030"/><use href="#eb" stroke="#20a050"/></g>
            <g transform="rotate(35)"><use href="#ry"/><use href="#ea" stroke="#e06070"/><use href="#eb" stroke="#80e080"/></g>
            <g transform="rotate(45)"><use href="#ry"/><use href="#ea" stroke="#c01050"/><use href="#eb" stroke="#d0e070"/></g>
            <g transform="rotate(55)"><use href="#ry"/><use href="#ea" stroke="#6040d0"/><use href="#eb" stroke="#90e070"/></g>
            <g transform="rotate(65)"><use href="#ry"/><use href="#ea" stroke="#808020"/><use href="#eb" stroke="#e8f060"/></g>
            <g transform="rotate(75)"><use href="#ry"/><use href="#ea" stroke="#c060d0"/><use href="#eb" stroke="#a03030"/></g>
            <g transform="rotate(85)"><use href="#ry"/><use href="#ea" stroke="#7080b0"/><use href="#eb" stroke="#e8c890"/></g>
            <g transform="rotate(95)"><use href="#ry"/><use href="#ea" stroke="#902010"/><use href="#eb" stroke="#902010"/></g>
            <g transform="rotate(105)"><use href="#ry"/><use href="#ea" stroke="#803020"/><use href="#eb" stroke="#d060a0"/></g>
            <g transform="rotate(115)"><use href="#ry"/><use href="#ea" stroke="#106060"/><use href="#eb" stroke="#808020"/></g>
            <g transform="rotate(125)"><use href="#ry"/><use href="#ea" stroke="#50e060"/><use href="#eb" stroke="#109070"/></g>
            <g transform="rotate(135)"><use href="#ry"/><use href="#ea" stroke="#8020a0"/><use href="#eb" stroke="#204060"/></g>
            <g transform="rotate(145)"><use href="#ry"/><use href="#ea" stroke="#607020"/><use href="#eb" stroke="#b0a040"/></g>
            <g transform="rotate(155)"><use href="#ry"/><use href="#ea" stroke="#600080"/><use href="#eb" stroke="#d040a0"/></g>
            <g transform="rotate(165)"><use href="#ry"/><use href="#ea" stroke="#20b0c0"/><use href="#eb" stroke="#20e020"/></g>
            <g transform="rotate(175)"><use href="#ry"/><use href="#ea" stroke="#7090e0"/><use href="#eb" stroke="#a0e0e0"/></g>
            <g transform="rotate(185)"><use href="#ry"/><use href="#ea" stroke="#20d0d0"/><use href="#eb" stroke="#507030"/></g>
            <g transform="rotate(195)"><use href="#ry"/><use href="#ea" stroke="#605020"/><use href="#eb" stroke="#c0d0a0"/></g>
            <g transform="rotate(205)"><use href="#ry"/><use href="#ea" stroke="#101040"/><use href="#eb" stroke="#208060"/></g>
            <g transform="rotate(215)"><use href="#ry"/><use href="#ea" stroke="#e05090"/><use href="#eb" stroke="#40b0a0"/></g>
            <g transform="rotate(225)"><use href="#ry"/><use href="#ea" stroke="#50b050"/><use href="#eb" stroke="#705020"/></g>
            <g transform="rotate(235)"><use href="#ry"/><use href="#ea" stroke="#400020"/><use href="#eb" stroke="#30d060"/></g>
            <g transform="rotate(245)"><use href="#ry"/><use href="#ea" stroke="#706080"/><use href="#eb" stroke="#603020"/></g>
            <g transform="rotate(255)"><use href="#ry"/><use href="#ea" stroke="#a0a080"/><use href="#eb" stroke="#c04040"/></g>
            <g transform="rotate(265)"><use href="#ry"/><use href="#ea" stroke="#9030c0"/><use href="#eb" stroke="#90e080"/></g>
            <g transform="rotate(275)"><use href="#ry"/><use href="#ea" stroke="#30b0c0"/><use href="#eb" stroke="#b040c0"/></g>
            <g transform="rotate(285)"><use href="#ry"/><use href="#ea" stroke="#400060"/><use href="#eb" stroke="#b030b0"/></g>
            <g transform="rotate(295)"><use href="#ry"/><use href="#ea" stroke="#2080d0"/><use href="#eb" stroke="#80d0d0"/></g>
            <g transform="rotate(305)"><use href="#ry"/><use href="#ea" stroke="#601010"/><use href="#eb" stroke="#701020"/></g>
            <g transform="rotate(315)"><use href="#ry"/><use href="#ea" stroke="#90d0e0"/><use href="#eb" stroke="#20a050"/></g>
            <g transform="rotate(325)"><use href="#ry"/><use href="#ea" stroke="#b080c0"/><use href="#eb" stroke="#908040"/></g>
            <g transform="rotate(335)"><use href="#ry"/><use href="#ea" stroke="#207020"/><use href="#eb" stroke="#6030b0"/></g>
            <g transform="rotate(345)"><use href="#ry"/><use href="#ea" stroke="#1030a0"/><use href="#eb" stroke="#909020"/></g>
            <g transform="rotate(355)"><use href="#ry"/><use href="#ea" stroke="#c03030"/><use href="#eb" stroke="#707020"/></g>
            <circle r="45.300" fill="#ffff00"/>
          </g>
          <circle cx="802" cy="289" r="68" fill="none" stroke="#ff0000" stroke-width="2"/>
          <polygon points="857,382 871,425.600 917,425.600 880,452.400 894,497 857,469 820,497 834,452.400 797,425.600 843,425.600" fill="#ff0000"/>
        </svg>
      </div>
      <div class="h-[25px] shrink-0 bg-[#f0eded] flex items-center pl-[5px] text-[11.500px]">44.8 , 188</div>
    </div>
  </div>
</div>
</div>
</body>
</html>
